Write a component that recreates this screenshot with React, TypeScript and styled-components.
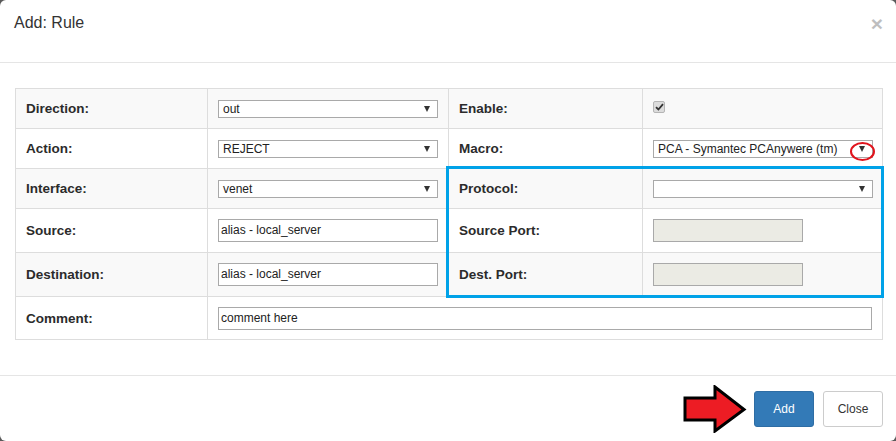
import React from "react";
import styled, { createGlobalStyle } from "styled-components";

const Global = createGlobalStyle`
  html, body { margin: 0; padding: 0; background: #5a5a5a; }
  body { font-family: "Liberation Sans", Arial, sans-serif; color: #333; }
  * { box-sizing: border-box; }
`;

const Modal = styled.div`
  width: 896px;
  height: 441px;
  background: #fff;
  border-radius: 6px;
  display: flex;
  flex-direction: column;
  overflow: hidden;
`;

const Header = styled.div`
  height: 63px;
  border-bottom: 1px solid #e5e5e5;
  display: flex;
  justify-content: space-between;
  align-items: flex-start;
  padding: 12px 13px 0 14px;
`;

const Title = styled.h4`
  margin: 0;
  font-size: 16px;
  line-height: 22px;
  font-weight: normal;
  color: #333;
`;

const CloseX = styled.span`
  font-size: 21px;
  line-height: 21px;
  font-weight: bold;
  color: #000;
  opacity: 0.25;
  margin-top: 1px;
`;

const Body = styled.div`
  padding: 25px 14px 35px 15px;
`;

const TableWrap = styled.div`
  position: relative;
  width: 867px;
`;

const Table = styled.table`
  width: 867px;
  border-collapse: collapse;
  table-layout: fixed;
  tbody tr:nth-child(odd) { background: #f9f9f9; }
`;

const Row = styled.tr<{ $h: number }>`
  height: ${(p) => p.$h}px;
`;

const Cell = styled.td`
  border: 1px solid #ddd;
  padding: 0 10px;
  vertical-align: middle;
`;

const Label = styled.td`
  border: 1px solid #ddd;
  padding: 0 10px;
  vertical-align: middle;
  font-weight: bold;
  font-size: 13.5px;
  color: #2b2b2b;
`;

const SelectBox = styled.div<{ $w?: number }>`
  position: relative;
  width: ${(p) => p.$w ?? 220}px;
  height: 18px;
  border: 1px solid #a9a9a9;
  background: #fff;
  font-size: 12px;
  line-height: 16px;
  padding-left: 4px;
  color: #222;
  display: flex;
  align-items: center;
  justify-content: space-between;
`;

const Arrow = styled.span`
  width: 0;
  height: 0;
  border-left: 3.5px solid transparent;
  border-right: 3.5px solid transparent;
  border-top: 6px solid #333;
  margin-right: 7px;
`;

const TextInput = styled.div<{ $w: number; $disabled?: boolean }>`
  width: ${(p) => p.$w}px;
  height: 23px;
  border: 1px solid #a9a9a9;
  background: ${(p) => (p.$disabled ? "#ebebe4" : "#fff")};
  font-size: 12px;
  line-height: 21px;
  padding-left: 2px;
  color: #222;
`;

const Check = styled.span`
  display: flex;
  align-items: center;
  justify-content: center;
  width: 12px;
  height: 12px;
  border: 1px solid #b5b5b5;
  border-radius: 2px;
  background: #dcdcdc;
  margin-top: -4px;
`;

const RedRing = styled.span`
  position: absolute;
  left: 196px;
  top: 1px;
  width: 25px;
  height: 19px;
  border: 2px solid #e0141d;
  border-radius: 50%;
`;

const BlueBox = styled.div`
  position: absolute;
  left: 431px;
  top: 78px;
  width: 438px;
  height: 132px;
  border: 3px solid #00a2e8;
  pointer-events: none;
`;

const Footer = styled.div`
  border-top: 1px solid #e5e5e5;
  display: flex;
  justify-content: flex-end;
  align-items: flex-start;
  padding: 15px 13px 0 15px;
  flex: 1;
`;

const PointArrow = styled.svg`
  margin: -6px 7px 0 0;
`;

const Button = styled.button<{ $primary?: boolean }>`
  width: 60px;
  height: 36px;
  font-family: "Liberation Sans", Arial, sans-serif;
  font-size: 12px;
  border-radius: 3px;
  border: 1px solid ${(p) => (p.$primary ? "#2e6da4" : "#ccc")};
  background: ${(p) => (p.$primary ? "#337ab7" : "#fff")};
  color: ${(p) => (p.$primary ? "#fff" : "#333")};
  padding: 0;
  & + & { margin-left: 9px; }
`;

const Select = ({ value, w, children }: { value: string; w?: number; children?: React.ReactNode }) => (
  <SelectBox $w={w}>
    <span>{value}</span>
    <Arrow />
    {children}
  </SelectBox>
);

export default function App() {
  return (
    <>
      <Global />
      <Modal>
        <Header>
          <Title>Add: Rule</Title>
          <CloseX>×</CloseX>
        </Header>
        <Body>
          <TableWrap>
            <Table>
              <colgroup>
                <col style={{ width: 192 }} />
                <col style={{ width: 241 }} />
                <col style={{ width: 194 }} />
                <col style={{ width: 240 }} />
              </colgroup>
              <tbody>
                <Row $h={40}>
                  <Label>Direction:</Label>
                  <Cell><Select value="out" /></Cell>
                  <Label>Enable:</Label>
                  <Cell>
                    <Check>
                      <svg width="9" height="8" viewBox="0 0 9 8">
                        <path d="M1 4.2 L3.4 6.5 L8 1.2" fill="none" stroke="#333" strokeWidth="1.8" />
                      </svg>
                    </Check>
                  </Cell>
                </Row>
                <Row $h={40}>
                  <Label>Action:</Label>
                  <Cell><Select value="REJECT" /></Cell>
                  <Label>Macro:</Label>
                  <Cell>
                    <Select value="PCA - Symantec PCAnywere (tm)">
                      <RedRing />
                    </Select>
                  </Cell>
                </Row>
                <Row $h={40}>
                  <Label>Interface:</Label>
                  <Cell><Select value="venet" /></Cell>
                  <Label>Protocol:</Label>
                  <Cell><Select value="" /></Cell>
                </Row>
                <Row $h={44}>
                  <Label>Source:</Label>
                  <Cell><TextInput $w={220}>alias - local_server</TextInput></Cell>
                  <Label>Source Port:</Label>
                  <Cell><TextInput $w={150} $disabled /></Cell>
                </Row>
                <Row $h={44}>
                  <Label>Destination:</Label>
                  <Cell><TextInput $w={220}>alias - local_server</TextInput></Cell>
                  <Label>Dest. Port:</Label>
                  <Cell><TextInput $w={150} $disabled /></Cell>
                </Row>
                <Row $h={43}>
                  <Label>Comment:</Label>
                  <Cell colSpan={3}><TextInput $w={654}>comment here</TextInput></Cell>
                </Row>
              </tbody>
            </Table>
            <BlueBox />
          </TableWrap>
        </Body>
        <Footer>
          <PointArrow width="64" height="48" viewBox="0 0 64 48">
            <polygon
              points="2,13 32,13 32,2 61,24.5 32,46 32,35 2,35"
              fill="#ed1c24"
              stroke="#000"
              strokeWidth="3"
              strokeLinejoin="miter"
            />
          </PointArrow>
          <Button $primary>Add</Button>
          <Button>Close</Button>
        </Footer>
      </Modal>
    </>
  );
}
